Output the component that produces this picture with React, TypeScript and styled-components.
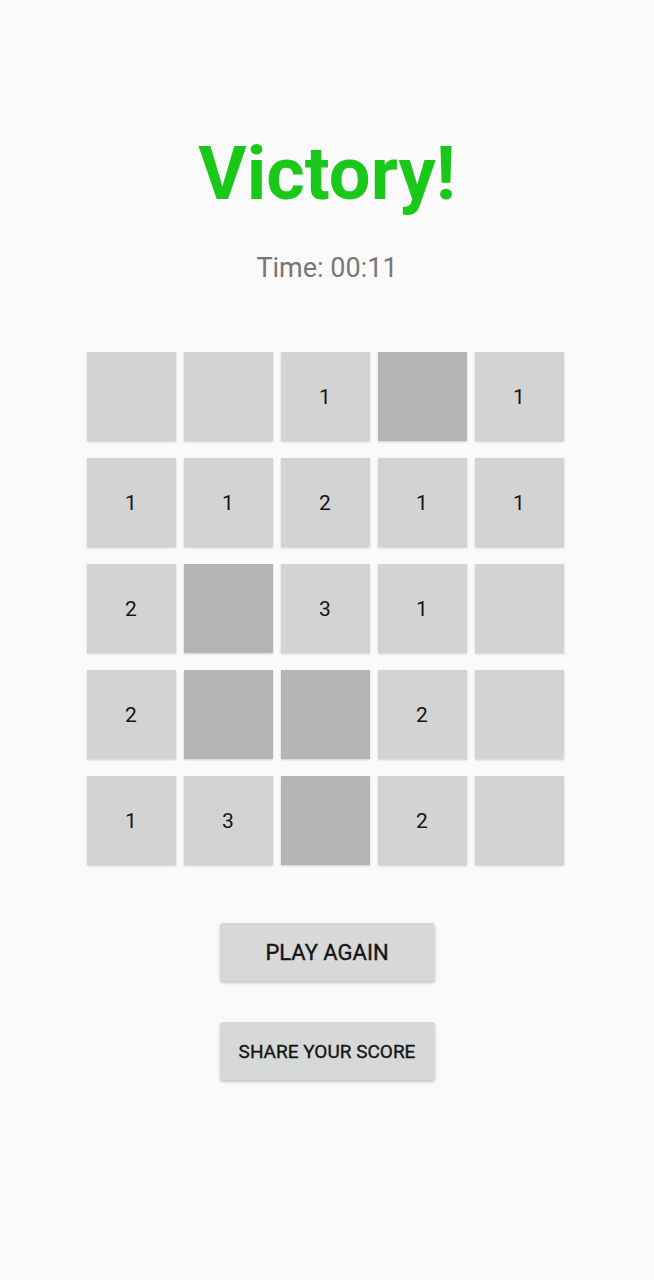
import React from "react";
import styled, { createGlobalStyle } from "styled-components";

const Global = createGlobalStyle`
  html, body { margin: 0; padding: 0; background: #fafafa; }
  body { font-family: Roboto, "Liberation Sans", sans-serif; }
`;

const Page = styled.div`
  width: 654px;
  min-height: 1280px;
  display: flex;
  flex-direction: column;
  align-items: center;
  background: #fafafa;
`;

const Title = styled.h1`
  margin: 126px 0 0;
  font-size: 74px;
  line-height: 96px;
  font-weight: 700;
  color: #1ac81a;
`;

const Time = styled.div`
  margin-top: 30px;
  font-size: 27px;
  line-height: 32px;
  color: #777;
`;

const Board = styled.div`
  margin: 68px 4px 0 0;
  display: grid;
  grid-template-columns: repeat(5, 89px);
  grid-auto-rows: 89px;
  column-gap: 8px;
  row-gap: 17px;
`;

const Cell = styled.div<{ $mine?: boolean }>`
  display: flex;
  align-items: center;
  justify-content: center;
  background: ${(p) => (p.$mine ? "#b4b4b4" : "#d3d3d3")};
  box-shadow: 0 1px 2px rgba(0, 0, 0, 0.18);
  font-size: 21px;
  color: #151515;
`;

const Buttons = styled.div`
  margin-top: 58px;
  display: flex;
  flex-direction: column;
  gap: 41px;
`;

const Button = styled.button<{ $small?: boolean }>`
  width: 215px;
  height: 58px;
  border: none;
  border-radius: 3px;
  background: #d7d8d8;
  box-shadow: 0 2px 3px rgba(0, 0, 0, 0.22);
  font-family: Roboto, "Liberation Sans", sans-serif;
  font-size: ${(p) => (p.$small ? "19px" : "22px")};
  font-weight: 400;
  -webkit-text-stroke: 0.35px #151515;
  color: #151515;
  padding: 0;
`;

type C = string | null; // null = mine
const board: C[][] = [
  ["", "", "1", null, "1"],
  ["1", "1", "2", "1", "1"],
  ["2", null, "3", "1", ""],
  ["2", null, null, "2", ""],
  ["1", "3", null, "2", ""],
];

export default function App() {
  return (
    <Page>
      <Global />
      <Title>Victory!</Title>
      <Time>Time: 00:11</Time>
      <Board>
        {board.flatMap((row, r) =>
          row.map((c, i) => (
            <Cell key={`${r}-${i}`} $mine={c === null}>
              {c}
            </Cell>
          ))
        )}
      </Board>
      <Buttons>
        <Button>PLAY AGAIN</Button>
        <Button $small>SHARE YOUR SCORE</Button>
      </Buttons>
    </Page>
  );
}
